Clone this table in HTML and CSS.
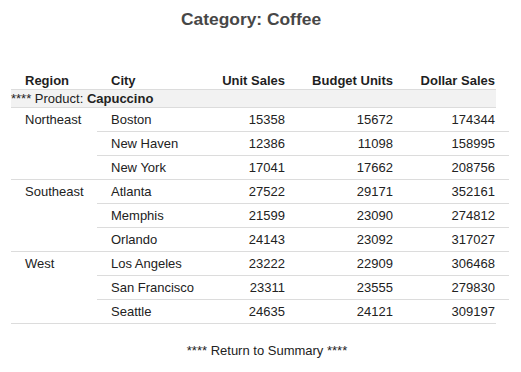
FILE: index.html
```html
<!DOCTYPE html>
<html>
<head>
<meta charset="utf-8">
<link rel="stylesheet" href="styles.css">
</head>
<body>
<h1 class="title">Category: Coffee</h1>
<table class="report">
  <colgroup>
    <col class="c-region"><col class="c-city"><col class="c-unit"><col class="c-budget"><col class="c-dollar"><col class="c-extra">
  </colgroup>
  <thead>
    <tr class="head">
      <th class="left pad">Region</th>
      <th class="left pad">City</th>
      <th class="right">Unit Sales</th>
      <th class="right">Budget Units</th>
      <th class="right">Dollar Sales</th>
      <th class="extra"></th>
    </tr>
  </thead>
  <tbody>
    <tr class="product">
      <td colspan="5" class="product-cell">**** Product: <b>Capuccino</b></td>
      <td class="extra"></td>
    </tr>
    <tr class="first">
      <td rowspan="3" class="region pad">Northeast</td>
      <td class="pad">Boston</td><td class="right">15358</td><td class="right">15672</td><td class="right">174344</td><td class="extra"></td>
    </tr>
    <tr><td class="pad">New Haven</td><td class="right">12386</td><td class="right">11098</td><td class="right">158995</td><td></td></tr>
    <tr><td class="pad">New York</td><td class="right">17041</td><td class="right">17662</td><td class="right">208756</td><td></td></tr>
    <tr>
      <td rowspan="3" class="region pad">Southeast</td>
      <td class="pad">Atlanta</td><td class="right">27522</td><td class="right">29171</td><td class="right">352161</td><td></td>
    </tr>
    <tr><td class="pad">Memphis</td><td class="right">21599</td><td class="right">23090</td><td class="right">274812</td><td></td></tr>
    <tr><td class="pad">Orlando</td><td class="right">24143</td><td class="right">23092</td><td class="right">317027</td><td></td></tr>
    <tr>
      <td rowspan="3" class="region pad last">West</td>
      <td class="pad">Los Angeles</td><td class="right">23222</td><td class="right">22909</td><td class="right">306468</td><td></td>
    </tr>
    <tr><td class="pad">San Francisco</td><td class="right">23311</td><td class="right">23555</td><td class="right">279830</td><td></td></tr>
    <tr class="lastrow"><td class="pad last">Seattle</td><td class="right last">24635</td><td class="right last">24121</td><td class="right last">309197</td><td class="extra"></td></tr>
  </tbody>
</table>
<p class="footer">**** Return to Summary ****</p>
</body>
</html>
```
FILE: styles.css
```css
html, body {
  margin: 0;
  padding: 0;
  background: #ffffff;
}
body {
  margin: 8px;
  font-family: "Liberation Sans", Arial, sans-serif;
  font-size: 13px;
  color: #222222;
}
.title {
  margin: 1px 19px 0 0;
  font-size: 17.4px;
  line-height: 20px;
  font-weight: bold;
  color: #474747;
  text-align: center;
}
.report {
  margin: 44px 0 0 3px;
  border-collapse: collapse;
  table-layout: fixed;
  width: 498px;
}
.c-region { width: 86px; }
.c-city { width: 103px; }
.c-unit { width: 86px; }
.c-budget { width: 108px; }
.c-dollar { width: 102px; }
.c-extra { width: 13px; }

.report th, .report td {
  padding: 4px 1px 4px 0;
  line-height: 15px;
  white-space: nowrap;
  vertical-align: top;
  border-top: 1px solid #dcdcdc;
}
.report .head th {
  padding: 0 1px 1px 0;
  border-top: none;
  border-bottom: 1px solid #dcdcdc;
  font-weight: bold;
  color: #1f1f1f;
}
.report .head th.extra {
  border-bottom: none;
}
.left { text-align: left; }
.right { text-align: right; }
.report .pad,
.report .head th.pad { padding-left: 14px; }
.report .product td {
  padding: 1px 0 1px 0;
  border-top: none;
}
.report .product .product-cell {
  background: #f2f2f2;
  border-bottom: 1px solid #dcdcdc;
}
.report .product td.extra {
  border-bottom: none;
}
.report .first td {
  border-top: none;
}
.report td.last {
  border-bottom: 1px solid #dcdcdc;
}
.footer {
  margin: 19px 0 0 13px;
  line-height: 15px;
  text-align: center;
}
```
